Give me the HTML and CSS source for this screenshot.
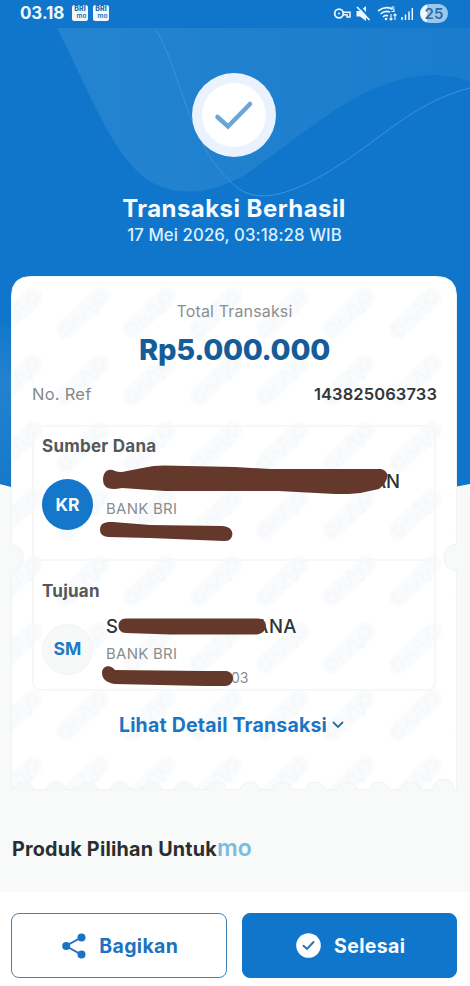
FILE: index.html
```html
<!DOCTYPE html>
<html lang="id">
<head>
<meta charset="utf-8">
<title>Transaksi Berhasil</title>
<link rel="stylesheet" href="styles.css">
</head>
<body>
<div class="screen">
  <svg class="backdrop" width="470" height="500" viewBox="0 0 470 500">
    <defs>
      <linearGradient id="wave" x1="0" y1="0" x2="1" y2="0">
        <stop offset="0" stop-color="#2484d0"/><stop offset="1" stop-color="#1a7ccd"/>
      </linearGradient>
      <linearGradient id="edge" x1="0" y1="0" x2="0" y2="1">
        <stop offset="0" stop-color="#2382ce" stop-opacity="0"/><stop offset=".4" stop-color="#2382ce"/><stop offset="1" stop-color="#1778ca"/>
      </linearGradient>
    </defs>
    <path d="M0 0H470V484Q235 530 0 484Z" fill="#1076cb"/>
    <path d="M57 28H470V82C448 73 421 72 386 84C342 99 296 139 251 171C214 196 168 200 139 173C105 139 88 88 57 28Z" fill="url(#wave)"/>
    <path d="M0 315L11 330V487L0 484Z" fill="url(#edge)"/>
    <path d="M156 30C179 66 188 142 229 180C252 207 287 197 333 169C381 139 416 101 470 88" fill="none" stroke="#3b94d9" stroke-width="1"/>
  </svg>

  <header class="status">
    <span class="clock">03.18</span>
    <span class="app"><span>BRI</span><small>mo</small></span>
    <span class="app"><span>BRI</span><small>mo</small></span>
    <svg class="status-icons" width="82" height="20" viewBox="0 0 82 20" fill="none" stroke="#eef7ff">
      <circle cx="6" cy="9.500" r="4.300" stroke-width="1.800"/><circle cx="6" cy="9.500" r="1" fill="#eef7ff" stroke="none"/>
      <path d="M10 8.200H17V13H14V10.800H10" stroke-width="1.500"/>
      <path d="M23.500 7H27L33 2V17L27 12.500H23.500Z" fill="#eef7ff" stroke="none"/>
      <path d="M25.500 1.500L38 15" stroke="#1076cb" stroke-width="2.200"/><path d="M24 3L36.500 16" stroke-width="1.700"/>
      <path d="M45 7Q52 1.500 59 5M47.500 10Q52 6.200 57 8M50 12.800Q52.500 10.500 55 12" stroke-width="1.600"/>
      <circle cx="53" cy="15" r="1.300" fill="#eef7ff" stroke="none"/>
      <path d="M61.500 3H59V5H61V7.500H58.500M58 10V16M56.500 14.500L58 16L59.500 14.500M62 16V10M60.500 11.500L62 10L63.500 11.500" stroke-width="1.100"/>
      <path d="M69 16V13M72.500 16V10.500M76 16V7.500M79.300 16V4" stroke-width="1.500"/>
    </svg>
    <span class="battery">25</span>
  </header>

  <section class="hero">
    <svg width="84" height="84" viewBox="0 0 84 84">
      <circle cx="42" cy="42" r="42" fill="#e9f2fd"/>
      <circle cx="42" cy="42" r="32" fill="#fff"/>
      <path d="M25.500 44L36 53.500L58 31" fill="none" stroke="#6aa5d6" stroke-width="4.500" stroke-linecap="round"/>
    </svg>
    <h1><span>Transaksi Berhasil</span></h1>
    <p>17 Mei 2026, 03:18:28 WIB</p>
  </section>

  <main class="receipt">
    <svg class="paper" width="446" height="516" viewBox="0 0 446 516">
      <defs>
        <pattern id="stamps" width="66.500" height="67" patternUnits="userSpaceOnUse" x="38.500" y="3.500">
          <g transform="translate(33.250 33.500) rotate(-44)">
            <rect x="-33" y="-9.500" width="66" height="19" rx="9" fill="#fafbfd"/>
            <g fill="none" stroke="#f6f9fb" stroke-width="2.500">
              <circle cx="-23" cy="0" r="5"/><path d="M-14 4Q-10 -8 -6 2T2 -1T9 3T16 -3"/><circle cx="22" cy="0" r="5"/>
            </g>
          </g>
        </pattern>
        <path id="sheet" d="M20 .5H425.500Q445.500 .5 445.500 20V268Q433 270 433 281.500Q433 293 445.500 295V513.500
          H443A10.500 10.500 0 0 0 422 513.500H410A10.500 10.500 0 0 0 390 513.500H378A10.500 10.500 0 0 0 358 513.500H346A10.500 10.500 0 0 0 326 513.500H314A10.500 10.500 0 0 0 294 513.500H281A10.500 10.500 0 0 0 261 513.500H249A10.500 10.500 0 0 0 229 513.500H216A10.500 10.500 0 0 0 196 513.500H183A10.500 10.500 0 0 0 163 513.500H151A10.500 10.500 0 0 0 131 513.500H119A10.500 10.500 0 0 0 99 513.500H87A10.500 10.500 0 0 0 67 513.500H55A10.500 10.500 0 0 0 35 513.500H23A10.500 10.500 0 0 0 3 513.500H.5V295Q12 293 12 281.500Q12 270 .5 268V20Q.5 .5 20 .5Z"/>
      </defs>
      <use href="#sheet" fill="#fff"/>
      <use href="#sheet" fill="url(#stamps)" stroke="#f0f2f3"/>
    </svg>
    <p class="total-label">Total Transaksi</p>
    <p class="total">Rp5.000.000</p>
    <div class="ref"><span>No. Ref</span><b>143825063733</b></div>

    <div class="parties">
      <section class="party">
        <h2>Sumber Dana</h2>
        <div class="row">
          <span class="avatar filled">KR</span>
          <div class="who">
            <p class="name name-end">AN</p>
            <p class="bank">BANK BRI</p>
            <p class="acct"></p>
          </div>
        </div>
        <svg class="marker" width="300" height="80" viewBox="100 463 300 80" fill="#64392b">
          <path d="M103 480C103 470 110 468 115 471Q120 473 127 471L145 467.500Q153 465.500 164 465.500L235 467L270 469H381Q386 470 387.500 475Q387 483 379 489L365 492Q355 494.500 335 494L278 491H165L122 488Q103 492 103 480Z"/>
          <path d="M100 530C100 523 105 521.500 113 522L150 525L222 526C236 526 235 542 224 541L150 538L108 537Q100 536 100 530Z"/>
        </svg>
      </section>
      <section class="party second">
        <h2>Tujuan</h2>
        <div class="row">
          <span class="avatar">SM</span>
          <div class="who">
            <p class="name name-split"><span>S</span><span>ANA</span></p>
            <p class="bank">BANK BRI</p>
            <p class="acct">03</p>
          </div>
        </div>
        <svg class="marker low" width="300" height="80" viewBox="100 610 300 80" fill="#64392b">
          <path d="M126 618.500H257C269 618 269 633 257 634.500H170L126 633C116 633 116 618.500 126 618.500Z"/>
          <path d="M102 673C102 665 111 664 115 670L205 671H226C236 672 235 686 225 686H205L115 684Q102 682 102 673Z"/>
        </svg>
      </section>
    </div>

    <div class="detail"><span>Lihat Detail Transaksi</span>
      <svg width="12" height="8" viewBox="0 0 12 8"><path d="M1.500 1.500L6 6L10.500 1.500" fill="none" stroke="#2f6c98" stroke-width="1.800" stroke-linecap="round"/></svg>
    </div>
  </main>

  <h3 class="products"><span>Produk Pilihan Untuk</span><i>mo</i></h3>

  <footer class="actions">
    <button class="share">
      <svg width="24" height="26" viewBox="0 0 24 26"><path d="M20 4L4 13L20 22" fill="none" stroke="#1c73c2" stroke-width="2"/><g fill="#1c73c2"><circle cx="19.500" cy="4.500" r="4"/><circle cx="4.200" cy="13" r="4"/><circle cx="19.500" cy="21.500" r="4"/></g></svg>
      <span>Bagikan</span>
    </button>
    <button class="done">
      <svg width="25" height="25" viewBox="0 0 25 25"><circle cx="12.500" cy="12.500" r="12.300" fill="#fff"/><path d="M7.500 12.700L11 16L17.500 9" fill="none" stroke="#2d6fad" stroke-width="1.900" stroke-linecap="round"/></svg>
      <span>Selesai</span>
    </button>
  </footer>
</div>
</body>
</html>
```
FILE: styles.css
```css
* { box-sizing: border-box; }
body { margin: 0; font-family: Inter, "Liberation Sans", sans-serif; }
h1, h2, h3, p { margin: 0; white-space: nowrap; }
.screen { position: relative; width: 470px; height: 986px; overflow: hidden; background: #f8faf9; display: flex; flex-direction: column; }
.backdrop { position: absolute; left: 0; top: 0; }
.status, .hero, .receipt, .products, .actions { position: relative; flex: none; }

.status { height: 28px; padding: 0 22px 0 20px; display: flex; align-items: center; color: #f2faff; }
.clock { font-size: 17px; font-weight: 700; width: 52px; letter-spacing: -.1px; margin-top: -2px; }
.app { width: 16px; height: 16px; margin: -2px 5px 0 0; border-radius: 2.500px; background: #f3faff; color: #1d6aac; font-size: 7px; line-height: 8px; font-weight: 800; display: flex; flex-direction: column; align-items: center; }
.app span { height: 8px; }
.app small { height: 8px; font-size: 6.500px; line-height: 7px; font-weight: 600; padding-left: 3px; }
.status-icons { margin-left: auto; }
.battery { width: 28px; height: 19px; margin: -2px 0 0 5px; border-radius: 10px; background: linear-gradient(90deg, #f3faff 24%, #9cc8ec 24%); color: #2b69a8; font-size: 15px; line-height: 19px; font-weight: 600; text-align: center; }

.hero { height: 248px; padding-top: 45px; text-align: center; display: flex; flex-direction: column; align-items: center; color: #f5fbff; }
.hero svg { display: block; margin-right: 2px; }
.hero h1 { margin: 38px 2px 0 0; font-size: 24px; line-height: 28px; font-weight: 700; letter-spacing: .45px; }
.hero p { margin-right: 1px; font-size: 16.800px; line-height: 24px; font-weight: 500; letter-spacing: .08px; color: #deeffc; }

.receipt { width: 446px; height: 516px; margin-left: 11px; padding: 24px 20px 0 21px; }
.paper { position: absolute; left: 0; top: 0; }
.receipt > *:not(.paper) { position: relative; }
.total-label { text-align: center; font-size: 16px; line-height: 22px; letter-spacing: .15px; color: #8b8f91; }
.total { margin-top: 10px; text-align: center; font-size: 29px; line-height: 36px; font-weight: 800; letter-spacing: -.3px; color: #155d99; }
.ref { margin-top: 15px; height: 22px; display: flex; justify-content: space-between; align-items: center; font-size: 16.500px; letter-spacing: .25px; color: #85898b; }
.ref b { font-weight: 600; letter-spacing: .1px; color: #333639; }
.parties { margin-top: 20px; width: 404px; height: 266px; border: 2px solid #f6f8f8; border-radius: 8px; }
.party { position: relative; height: 132px; padding: 8px 0 0 8px; }
.second { border-top: 2px solid #f6f8f8; padding-top: 19px; }
.party h2 { font-size: 17px; line-height: 22px; font-weight: 700; letter-spacing: .25px; color: #54585a; }
.row { display: flex; gap: 13px; margin-top: 12px; }
.avatar { width: 51px; height: 51px; margin-top: 10px; border-radius: 50%; font-size: 17.500px; line-height: 51px; text-align: center; font-weight: 700; background: #f7f9f9; border: 1px solid #f2f4f4; color: #1c79c8; }
.avatar.filled { background: #1477ca; border: 0; color: #f1f9ff; }
.second .avatar { line-height: 48px; }
.who { width: 300px; }
.name { height: 24px; line-height: 24px; font-size: 18.500px; font-weight: 500; color: #303336; }
.name-end { padding-left: 267px; }
.name-split { display: flex; gap: 137px; letter-spacing: .4px; }
.bank { margin-top: 4px; font-size: 15px; line-height: 24px; letter-spacing: .25px; color: #8a8e90; }
.acct { font-size: 14px; line-height: 24px; padding-left: 125px; color: #8a8e90; }
.marker { position: absolute; left: 66px; top: 36px; }
.marker.low { top: 49px; }
.detail { margin: 22px 6px 0 0; height: 24px; display: flex; justify-content: center; align-items: center; gap: 5px; font-size: 19.500px; font-weight: 700; letter-spacing: .2px; color: #1c75c3; }

.products { margin: 43px 0 0 12px; height: 28px; display: flex; align-items: center; font-size: 19.800px; font-weight: 700; letter-spacing: .2px; color: #2b2e30; }
.products i { font-style: normal; font-weight: 600; font-size: 23px; line-height: 24px; letter-spacing: 0; color: #78bde0; margin-top: -3px; }
.actions { margin-top: auto; height: 94px; background: #fff; padding: 21px 13px 0 11px; display: flex; gap: 15px; }
.actions button { flex: 1; height: 65px; border-radius: 8px; border: 1.500px solid #4384b8; background: #fff; color: #1c73c2; font: 700 19.500px/24px Inter, sans-serif; letter-spacing: .35px; display: flex; align-items: center; justify-content: center; gap: 13px; padding: 0 0 0 3px; }
.actions .done { background: #1076cb; border-color: #1076cb; color: #f5fbff; }
```
